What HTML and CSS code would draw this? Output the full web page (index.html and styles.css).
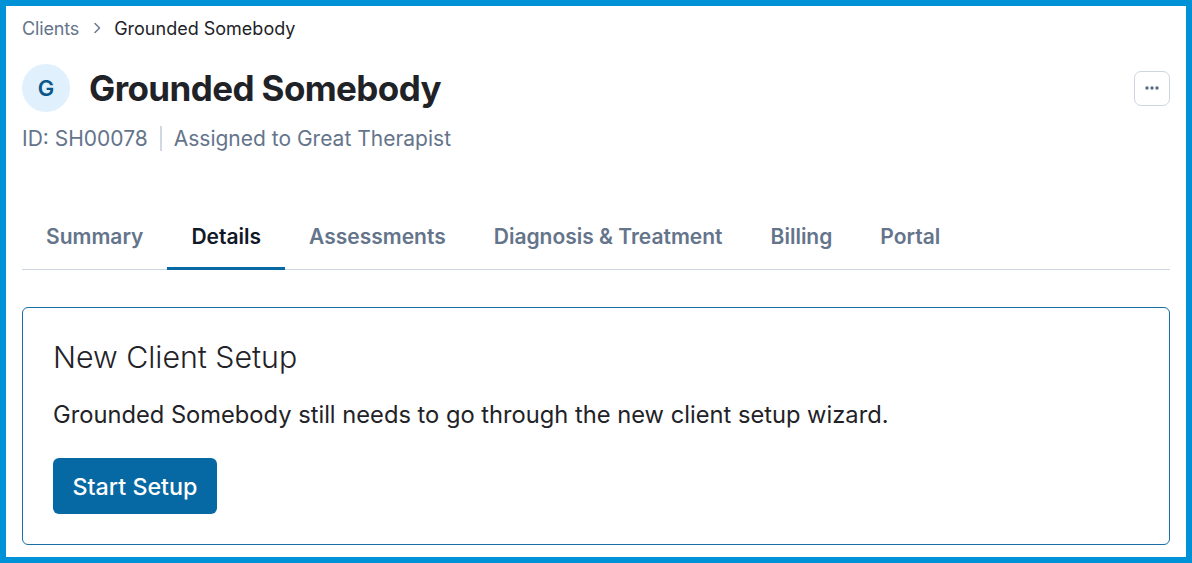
FILE: index.html
```html
<!DOCTYPE html>
<html lang="en">
<head>
<meta charset="utf-8">
<title>Grounded Somebody</title>
<link rel="stylesheet" href="styles.css">
</head>
<body>
<div class="frame">
  <nav class="crumbs">
    <span class="crumb-link">Clients</span>
    <svg class="chev" width="12" height="12" viewBox="0 0 12 12"><path d="M4 1.5l4.5 4.5-4.5 4.5" fill="none" stroke="#6b7a90" stroke-width="1.5" stroke-linecap="round" stroke-linejoin="round"/></svg>
    <span class="crumb-current">Grounded Somebody</span>
  </nav>
  <header class="head">
    <div class="avatar">G</div>
    <h1 class="title">Grounded Somebody</h1>
    <button class="more" aria-label="More">
      <svg width="16" height="4" viewBox="0 0 16 4"><circle cx="3" cy="2" r="1.7" fill="#5b6b82"/><circle cx="8" cy="2" r="1.7" fill="#5b6b82"/><circle cx="13" cy="2" r="1.7" fill="#5b6b82"/></svg>
    </button>
  </header>
  <div class="meta">
    <span>ID: SH00078</span>
    <span class="sep"></span>
    <span>Assigned to Great Therapist</span>
  </div>
  <div class="tabs">
    <span class="tab">Summary</span>
    <span class="tab active">Details</span>
    <span class="tab">Assessments</span>
    <span class="tab">Diagnosis &amp; Treatment</span>
    <span class="tab">Billing</span>
    <span class="tab">Portal</span>
  </div>
  <section class="card">
    <h2 class="card-title">New Client Setup</h2>
    <p class="card-text">Grounded Somebody still needs to go through the new client setup wizard.</p>
    <button class="btn">Start Setup</button>
  </section>
</div>
</body>
</html>
```

FILE: styles.css
```css
* { box-sizing: border-box; }
html, body { margin: 0; padding: 0; }
body {
  width: 1192px;
  height: 563px;
  font-family: Inter, "Noto Sans", sans-serif;
  background: #fff;
  overflow: hidden;
}
.frame {
  width: 1192px;
  height: 563px;
  border: 6px solid #0092d6;
  padding: 10px 16px 0 16px;
}
.crumbs {
  display: flex;
  align-items: center;
  height: 24px;
  font-size: 18px;
}
.crumb-link { color: #64748b; letter-spacing: -0.15px; }
.chev { margin: 0 11px 0 12px; }
.crumb-current { color: #1e2329; }
.head {
  display: flex;
  align-items: center;
  margin-top: 24px;
  height: 48px;
}
.avatar {
  width: 48px;
  height: 48px;
  border-radius: 50%;
  background: #e0f0fc;
  color: #0b5789;
  font-size: 22px;
  font-weight: 600;
  display: flex;
  align-items: center;
  justify-content: center;
  flex: none;
}
.title {
  margin: 0 0 0 19px;
  font-size: 35px;
  font-weight: 700;
  color: #1f2328;
  letter-spacing: -0.6px;
  line-height: 44px;
  flex: 1;
}
.more {
  width: 36px;
  height: 35px;
  border: 1px solid #cdd5e0;
  border-radius: 7px;
  background: #fff;
  display: flex;
  align-items: center;
  justify-content: center;
  padding: 0;
}
.meta {
  display: flex;
  align-items: center;
  margin-top: 12px;
  height: 28px;
  font-size: 21px;
  color: #64748b;
}
.sep {
  width: 2px;
  height: 25px;
  background: #cfd8e3;
  margin: 0 12px 0 12px;
}
.tabs {
  display: flex;
  margin-top: 60px;
  border-bottom: 1px solid #cdd5e3;
}
.tab {
  padding: 12px 24px 17px 24px;
  font-size: 21px;
  line-height: 26px;
  font-weight: 600;
  color: #64748b;
  margin-bottom: -1px;
  border-bottom: 3px solid transparent;
}
.tab.active {
  color: #111827;
  border-bottom-color: #0669a3;
}
.card {
  margin-top: 37px;
  border: 1px solid #1a6ea6;
  border-radius: 6px;
  padding: 31px 30px 30px 30px;
}
.card-title {
  margin: 0;
  font-size: 30.3px;
  font-weight: 300;
  color: #1f2328;
  line-height: 36px;
}
.card-text {
  margin: 24px 0 0 0;
  font-size: 23.7px;
  line-height: 32px;
  color: #1f2328;
}
.btn {
  display: block;
  margin-top: 27px;
  width: 164px;
  height: 56px;
  border: none;
  border-radius: 6px;
  background: #0669a3;
  color: #fff;
  font-family: inherit;
  font-size: 23.3px;
  font-weight: 500;
  padding: 0;
}
```
